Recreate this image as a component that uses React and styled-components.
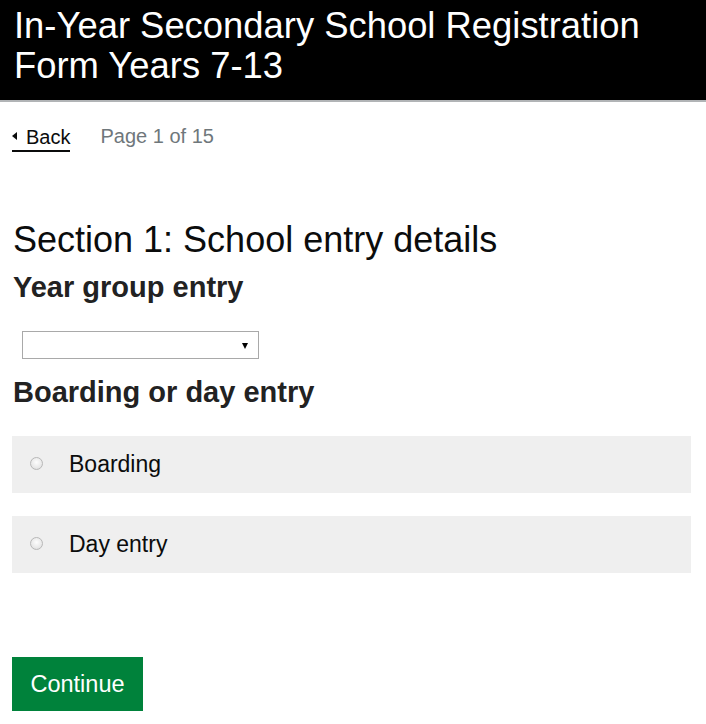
import React, { useState } from 'react';
import styled, { createGlobalStyle } from 'styled-components'

const GlobalStyle = createGlobalStyle`
body {
  margin:0;
  font-family:"Liberation Sans", Arial, sans-serif;
  color:#0b0c0c;
  background:#fff;
}
`

const Header = styled.header`
background:#000;
border-bottom:2px solid #b1b4b6;
padding:6px 14px 14px;
height:80px;
& h1 {
  margin:0;
  color:#fff;
  font-weight:normal;
  font-size:36.4px;
  line-height:40px;
}
`

const Main = styled.main`
padding:0 12px;
`

const NavRow = styled.div`
display:flex;
align-items:center;
gap:30px;
margin-top:23px;
font-size:20px;
`

const BackLink = styled.a`
display:flex;
align-items:center;
gap:9px;
color:#0b0c0c;
text-decoration:none;
border-bottom:2px solid #0b0c0c;
padding-bottom:2px;
line-height:22px;
cursor:pointer;
&::before {
  content:'';
  border-style:solid;
  border-width:4px 5px 4px 0;
  border-color:transparent #0b0c0c transparent transparent;
  margin-bottom:2px;
}
`

const PageCount = styled.span`
color:#6f777b;
padding-bottom:4px;
`

const SectionTitle = styled.h2`
margin:68px 0 0 1px;
font-weight:normal;
font-size:36px;
line-height:40px;
`

const Label = styled.h3`
margin:${(props) => props.top || '0'} 0 0 1px;
font-size:29px;
line-height:34px;
font-weight:bold;
color:#222;
`

const SelectWrap = styled.div`
position:relative;
width:247px;
margin-top:27px;
`

const Select = styled.select`
display:block;
margin-left:10px;
width:237px;
height:28px;
border:1px solid #a9a9a9;
background:#fff;
appearance:none;
`

const Arrow = styled.span`
position:absolute;
right:11px;
top:12px;
border-style:solid;
border-width:6px 3.5px 0 3.5px;
border-color:#000 transparent transparent transparent;
pointer-events:none;
`

const Options = styled.div`
display:flex;
flex-direction:column;
gap:23px;
margin-top:27px;
`

const Option = styled.label`
display:flex;
align-items:center;
gap:26px;
height:57px;
background:#efefef;
padding:0 0 0 18px;
width:679px;
box-sizing:border-box;
font-size:23px;
cursor:pointer;
`

const Radio = styled.input`
appearance:none;
margin:0 0 3px;
width:13px;
height:13px;
border-radius:50%;
border:1px solid #b8b8b8;
background:radial-gradient(circle at 50% 40%, #fdfdfd 0%, #e9e9e9 60%, #d8d8d8 100%);
&:checked {
  background:radial-gradient(circle, #333 0 30%, #f4f4f4 35%);
}
`

const ContinueButton = styled.button`
display:block;
margin-top:84px;
background:#00823b;
color:#fff;
border:none;
box-shadow:0 2px 0 #003618;
font-family:inherit;
font-size:23.5px;
width:131px;
height:54px;
padding:0;
cursor:pointer;
`

const App = () => {
  const [entry, setEntry] = useState('')
  const [year, setYear] = useState('')

  return (
    <>
      <GlobalStyle />
      <Header>
        <h1>In-Year Secondary School Registration Form Years 7-13</h1>
      </Header>
      <Main>
        <NavRow>
          <BackLink>Back</BackLink>
          <PageCount>Page 1 of 15</PageCount>
        </NavRow>
        <SectionTitle>Section 1: School entry details</SectionTitle>
        <Label top="10px">Year group entry</Label>
        <SelectWrap>
          <Select value={year} onChange={(e) => setYear(e.target.value)}>
            <option value=""></option>
            <option value="7">Year 7</option>
            <option value="8">Year 8</option>
            <option value="9">Year 9</option>
            <option value="10">Year 10</option>
            <option value="11">Year 11</option>
            <option value="12">Year 12</option>
            <option value="13">Year 13</option>
          </Select>
          <Arrow />
        </SelectWrap>
        <Label top="16px">Boarding or day entry</Label>
        <Options>
          <Option>
            <Radio type="radio" name="entry" value="boarding" checked={entry === 'boarding'} onChange={(e) => setEntry(e.target.value)} />
            Boarding
          </Option>
          <Option>
            <Radio type="radio" name="entry" value="day" checked={entry === 'day'} onChange={(e) => setEntry(e.target.value)} />
            Day entry
          </Option>
        </Options>
        <ContinueButton>Continue</ContinueButton>
      </Main>
    </>
  )
}

export default App
